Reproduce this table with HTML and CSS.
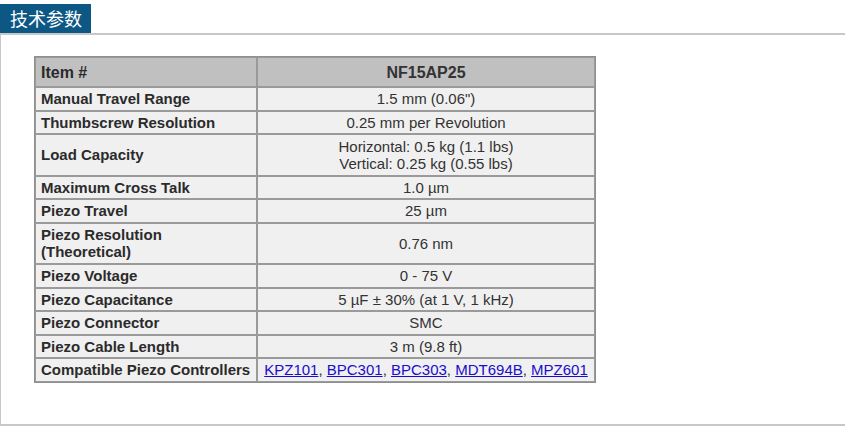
FILE: index.html
```html
<!DOCTYPE html>
<html lang="zh">
<head>
<meta charset="utf-8">
<title>技术参数</title>
<link rel="stylesheet" href="styles.css">
</head>
<body>
<div class="section">
  <div class="tab-row"><h2 class="tab">技术参数</h2></div>
  <div class="panel">
    <table class="spec">
      <colgroup><col class="c1"><col class="c2"></colgroup>
      <thead>
        <tr><th class="lbl">Item #</th><th>NF15AP25</th></tr>
      </thead>
      <tbody>
        <tr><th class="lbl">Manual Travel Range</th><td>1.5 mm (0.06")</td></tr>
        <tr><th class="lbl">Thumbscrew Resolution</th><td>0.25 mm per Revolution</td></tr>
        <tr class="tall"><th class="lbl">Load Capacity</th><td>Horizontal: 0.5 kg (1.1 lbs)<br>Vertical: 0.25 kg (0.55 lbs)</td></tr>
        <tr><th class="lbl">Maximum Cross Talk</th><td>1.0 µm</td></tr>
        <tr><th class="lbl">Piezo Travel</th><td>25 µm</td></tr>
        <tr class="tall"><th class="lbl">Piezo Resolution<br>(Theoretical)</th><td>0.76 nm</td></tr>
        <tr><th class="lbl">Piezo Voltage</th><td>0 - 75 V</td></tr>
        <tr><th class="lbl">Piezo Capacitance</th><td>5 µF ± 30% (at 1 V, 1 kHz)</td></tr>
        <tr><th class="lbl">Piezo Connector</th><td>SMC</td></tr>
        <tr><th class="lbl">Piezo Cable Length</th><td>3 m (9.8 ft)</td></tr>
        <tr><th class="lbl">Compatible Piezo Controllers</th><td><a href="#">KPZ101</a>, <a href="#">BPC301</a>, <a href="#">BPC303</a>, <a href="#">MDT694B</a>, <a href="#">MPZ601</a></td></tr>
      </tbody>
    </table>
  </div>
</div>
</body>
</html>
```

FILE: styles.css
```css
html, body {
  margin: 0;
  padding: 0;
  background: #fff;
}
body {
  font-family: Arial, "Liberation Sans", "Noto Sans CJK SC", sans-serif;
  color: #333;
}
.section {
  padding-top: 4px;
}
.tab-row {
  display: flex;
}
.tab {
  margin: 0;
  background: #0d5785;
  color: #fff;
  font-family: "Noto Sans CJK SC", "Noto Sans", sans-serif;
  font-weight: normal;
  font-size: 18px;
  line-height: 29px;
  height: 29px;
  padding: 0 9px 0 10px;
  width: 72px;
  white-space: nowrap;
}
.panel {
  border-left: 1px solid #c8c8c8;
  border-bottom: 2px solid #c8c8c8;
  border-top: 2px solid #c8c8c8;
  height: 393px;
  box-sizing: border-box;
  padding: 21px 0 0 33px;
}
.spec {
  border-collapse: separate;
  border-spacing: 0;
  border: 1px solid #8f8f8f;
  width: 562px;
  font-size: 15px;
}
.c1 { width: 222px; }
.spec th, .spec td {
  border: 1px solid #9a9a9a;
  padding: 0 5px;
  height: 21.5px;
  line-height: 17px;
  background: #f0f0f0;
}
.spec td {
  text-align: center;
  font-weight: normal;
  color: #333;
}
.spec th.lbl {
  text-align: left;
  font-weight: bold;
  color: #2b2b2b;
}
.spec thead th {
  background: #c0c0c0;
  height: 28px;
  font-size: 16px;
  text-align: center;
  font-weight: bold;
}
.spec thead th.lbl {
  text-align: left;
}
.spec tr.tall th, .spec tr.tall td {
  height: 39.5px;
}
.spec a {
  color: #1a0dcc;
  text-decoration: underline;
}
```
